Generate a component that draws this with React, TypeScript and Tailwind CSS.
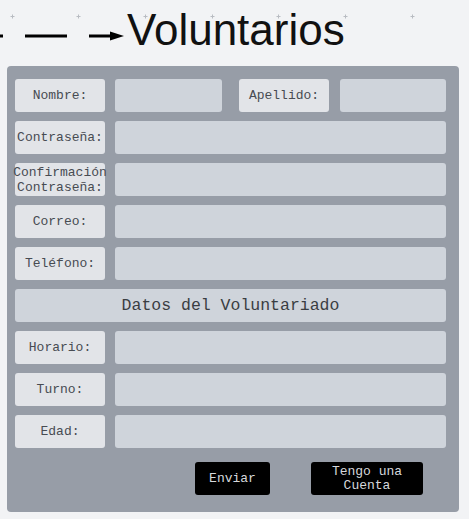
import React from 'react';

const mono = "font-['Liberation_Mono','DejaVu_Sans_Mono',monospace]";

// ── Small helpers ─────────────────────────────────────────────────────────────
function Label({ children, className = '' }: { children: React.ReactNode; className?: string }) {
  return (
    <div
      className={`flex h-[33px] w-[90px] shrink-0 items-center justify-center rounded-[3px] bg-[#e2e4e8] text-center text-[13px] leading-[15px] text-[#474b52] ${mono} ${className}`}
    >
      {children}
    </div>
  );
}

function Field({ className = '' }: { className?: string }) {
  return <div className={`h-[33px] flex-1 rounded-[3px] bg-[#cfd4db] ${className}`} />;
}

function Row({ label }: { label: React.ReactNode }) {
  return (
    <div className="flex gap-[10px]">
      <Label>{label}</Label>
      <Field />
    </div>
  );
}

export default function App() {
  const marks = [12, 78, 145, 212, 278, 345, 412];
  return (
    <div className="relative h-[519px] w-[469px] overflow-hidden bg-[#f2f3f5]">
      {/* grid marks */}
      {marks.map((x) => (
        <svg key={x} className="absolute top-[14px]" style={{ left: x - 2 }} width="5" height="5" viewBox="0 0 5 5">
          <path d="M2.5 0.5v4M0.5 2.5h4" stroke="#b9bcc2" strokeWidth="1" />
        </svg>
      ))}

      {/* Header */}
      <div className="relative flex h-[66px] items-start">
        <svg className="absolute left-0 top-[30px]" width="128" height="12" viewBox="0 0 128 12">
          <rect x="0" y="4.5" width="3" height="3" fill="#000" />
          <rect x="25" y="4.5" width="42" height="3" fill="#000" />
          <rect x="89" y="4.5" width="22" height="3" fill="#000" />
          <path d="M110 1.5 L124 6 L110 10.5 Z" fill="#000" />
        </svg>
        <h1 className="ml-[127px] mt-[5px] font-['Liberation_Sans',Arial,sans-serif] text-[44px] leading-[50px] text-[#111]">
          Voluntarios
        </h1>
      </div>

      {/* Form panel */}
      <div className="ml-[7px] w-[452px] rounded-[4px] bg-[#979da7] pb-[17px] pl-[8px] pr-[13px] pt-[13px]">
        <div className="flex flex-col gap-[9px]">
          <div className="flex">
            <Label>Nombre:</Label>
            <Field className="ml-[10px] !flex-none w-[107px]" />
            <Label className="ml-[17px] w-[89px]">Apellido:</Label>
            <Field className="ml-[11px]" />
          </div>
          <Row label="Contraseña:" />
          <Row
            label={
              <span className="-mx-2 block">
                Confirmación
                <br />
                Contraseña:
              </span>
            }
          />
          <Row label="Correo:" />
          <Row label="Teléfono:" />
          <div
            className={`flex h-[33px] items-center justify-center rounded-[3px] bg-[#cfd4db] pt-[2px] text-[16.5px] text-[#3a3d42] ${mono}`}
          >
            Datos del Voluntariado
          </div>
          <Row label="Horario:" />
          <Row label="Turno:" />
          <Row label="Edad:" />
        </div>

        {/* Buttons */}
        <div className={`mt-[14px] flex ${mono}`}>
          <button className="ml-[180px] flex h-[33px] w-[75px] items-center justify-center rounded-[3px] bg-black text-[13px] text-[#d6d8dc]">
            Enviar
          </button>
          <button className="ml-[41px] flex h-[33px] w-[112px] items-center justify-center rounded-[3px] bg-black text-center text-[13px] leading-[14px] text-[#d6d8dc]">
            Tengo una
            <br />
            Cuenta
          </button>
        </div>
      </div>
    </div>
  );
}
